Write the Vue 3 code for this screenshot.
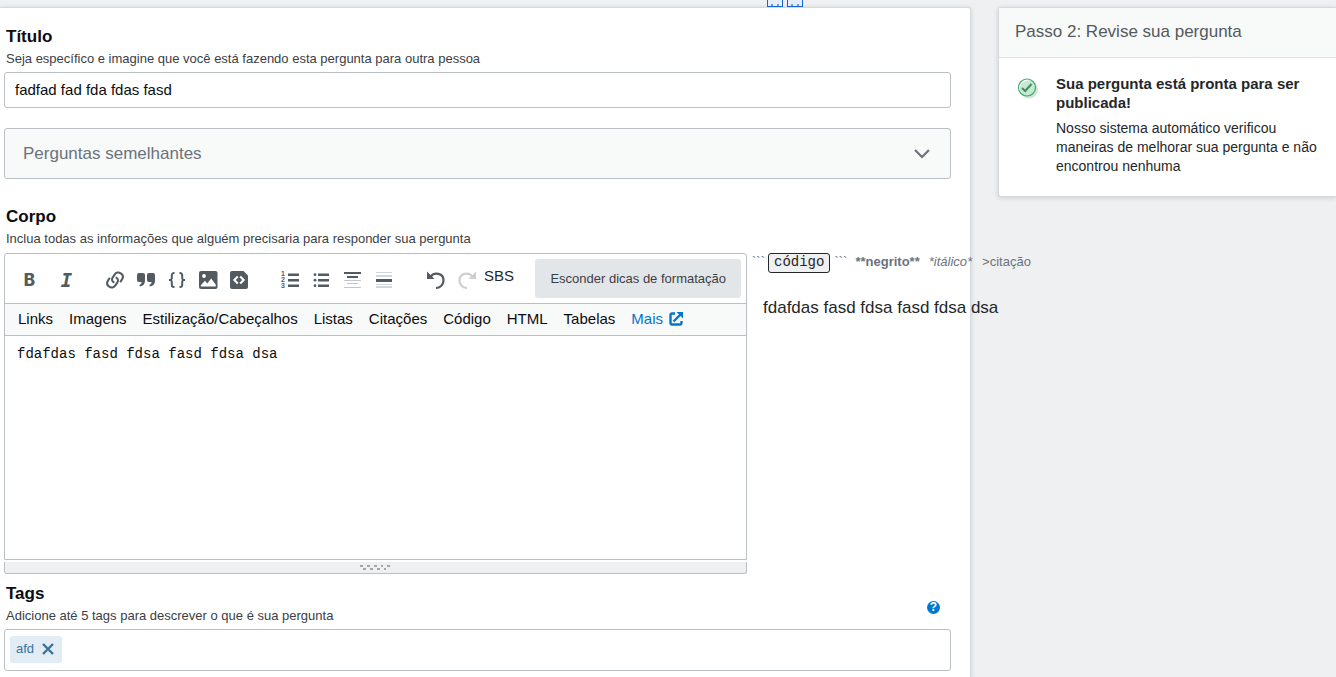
<script setup>
import { ref } from 'vue'

const title = ref('fadfad fad fda fdas fasd')
const body = ref('fdafdas fasd fdsa fasd fdsa dsa')
const helpLinks = ['Links', 'Imagens', 'Estilização/Cabeçalhos', 'Listas', 'Citações', 'Código', 'HTML', 'Tabelas']
</script>

<template>
  <div class="page">
    <div class="clipped-icons" aria-hidden="true"><span></span><span></span></div>
    <main class="card">
      <label class="heading" for="title">Título</label>
      <p class="hint">Seja específico e imagine que você está fazendo esta pergunta para outra pessoa</p>
      <input id="title" v-model="title" class="title-input" type="text">

      <button class="similar" type="button">
        <span>Perguntas semelhantes</span>
        <svg width="18" height="18" viewBox="0 0 18 18"><path d="M2 5l7 7 7-7" fill="none" stroke="#6a737c" stroke-width="2.200" /></svg>
      </button>

      <label class="heading" for="body">Corpo</label>
      <p class="hint">Inclua todas as informações que alguém precisaria para responder sua pergunta</p>

      <div class="compose">
        <div class="editor">
          <div class="frame">
            <div class="toolbar">
              <div class="group group-text">
                <button type="button" class="bold">B</button>
                <button type="button" class="italic">I</button>
              </div>
              <div class="group group-insert">
                <button type="button" aria-label="Link">
                  <svg width="20" height="20" viewBox="0 0 20 20" fill="none" stroke="#535a60" stroke-width="2">
                    <path d="M9.400 12.600C7.200 11.800 6.400 9.600 7.600 7.600L9.600 4.600C11 2.400 13.600 1.900 15.800 3.300S18.400 7.200 17 9.400L15.200 12.200" />
                    <path transform="rotate(180 10 10)" d="M9.400 12.600C7.200 11.800 6.400 9.600 7.600 7.600L9.600 4.600C11 2.400 13.600 1.900 15.800 3.300S18.400 7.200 17 9.400L15.200 12.200" />
                  </svg>
                </button>
                <button type="button" aria-label="Citação">
                  <svg width="20" height="20" viewBox="0 0 20 20" fill="#535a60">
                    <path d="M3 3h4a2 2 0 0 1 2 2v5.500c0 3.500-1.800 5.500-5 6l-.8-1.500c1.500-.6 2.400-1.500 2.400-3H3a2 2 0 0 1-2-2V5a2 2 0 0 1 2-2zM13 3h4a2 2 0 0 1 2 2v5.500c0 3.500-1.800 5.500-5 6l-.8-1.500c1.500-.6 2.400-1.500 2.400-3H13a2 2 0 0 1-2-2V5a2 2 0 0 1 2-2z" />
                  </svg>
                </button>
                <button type="button" aria-label="Código">
                  <svg width="20" height="20" viewBox="0 0 20 20" fill="none" stroke="#535a60" stroke-width="2">
                    <path d="M7.500 3H7a2.200 2.200 0 0 0-2.200 2.200v2.600A2 2 0 0 1 2.800 10H2h.8a2 2 0 0 1 2 2.200v2.600A2.200 2.200 0 0 0 7 17h.5M12.500 3h.5a2.200 2.200 0 0 1 2.200 2.200v2.600a2 2 0 0 0 2 2.200h.8-.8a2 2 0 0 0-2 2.200v2.600A2.200 2.200 0 0 1 13 17h-.5" />
                  </svg>
                </button>
                <button type="button" aria-label="Imagem">
                  <svg width="20" height="20" viewBox="0 0 20 20">
                    <rect x="1" y="1" width="18.500" height="18" rx="2" fill="#535a60" />
                    <circle cx="6" cy="6" r="1.900" fill="#fff" />
                    <path d="M2.800 16.500v-1.200l4.200-4.500 2.200 2.600 4-5 4.600 6.300v1.800z" fill="#fff" />
                  </svg>
                </button>
                <button type="button" aria-label="Trecho">
                  <svg width="20" height="20" viewBox="0 0 20 20">
                    <path d="M3 1h11.500L19 5.500V17a2 2 0 0 1-2 2H3a2 2 0 0 1-2-2V3a2 2 0 0 1 2-2z" fill="#535a60" />
                    <path d="M8.800 6.500L5.300 10l3.500 3.500M11.200 6.500l3.500 3.500-3.500 3.500" fill="none" stroke="#fff" stroke-width="2" />
                  </svg>
                </button>
              </div>
              <div class="group group-block">
                <button type="button" aria-label="Lista numerada">
                  <svg width="20" height="20" viewBox="0 0 20 20" fill="#535a60">
                    <path d="M8 3.500h11v2.500H8zM8 9h11v2.500H8zM8 14.500h11v2.500H8z" />
                    <g class="digits"><text x="1" y="6">1</text><text x="1" y="12">2</text><text x="1" y="18">3</text></g>
                  </svg>
                </button>
                <button type="button" aria-label="Lista">
                  <svg width="20" height="20" viewBox="0 0 20 20" fill="#535a60">
                    <path d="M7 3.500h11v2.500H7zM7 9h11v2.500H7zM7 14.500h11v2.500H7z" />
                    <circle cx="4" cy="4.700" r="1.400" /><circle cx="4" cy="10.200" r="1.400" /><circle cx="4" cy="15.700" r="1.400" />
                  </svg>
                </button>
                <button type="button" aria-label="Título">
                  <svg width="20" height="20" viewBox="0 0 20 20">
                    <path d="M2 2h17v2H2zM5 6h11v2H5z" fill="#535a60" />
                    <path d="M2 10h17v1H2zM5 13h11v1H5zM2 17h17v1H2z" fill="#c4c7ca" />
                  </svg>
                </button>
                <button type="button" aria-label="Linha">
                  <svg width="20" height="20" viewBox="0 0 20 20">
                    <path d="M3 2h16v1H3zM3 5h16v2H3zM3 14h16v1H3zM3 16h16v2H3z" fill="#d4d6d8" />
                    <path d="M3 9h16v3H3z" fill="#535a60" />
                  </svg>
                </button>
              </div>
              <div class="group group-history">
                <button type="button" aria-label="Desfazer">
                  <svg width="20" height="20" viewBox="0 0 20 20">
                    <path d="M4 7.500C8 1 18 3 17.500 11c-.3 4-3.500 7-7.500 7" fill="none" stroke="#535a60" stroke-width="2.200" />
                    <path d="M1 1.500v7.500h7.500z" fill="#535a60" />
                  </svg>
                </button>
                <button type="button" aria-label="Refazer" disabled>
                  <svg width="20" height="20" viewBox="0 0 20 20">
                    <path d="M16 7.500C12 1 2 3 2.500 11c.3 4 3.500 7 7.500 7" fill="none" stroke="#ccced1" stroke-width="2.200" />
                    <path d="M19 1.500v7.500h-7.500z" fill="#ccced1" />
                  </svg>
                </button>
              </div>
              <button type="button" class="sbs">SBS</button>
              <button type="button" class="toggle">Esconder dicas de formatação</button>
            </div>
            <nav class="help">
              <a v-for="item in helpLinks" :key="item" href="#">{{ item }}</a>
              <a href="#" class="more">Mais
                <svg width="14" height="14" viewBox="0 0 14 14">
                  <path d="M6 1.500H3A1.500 1.500 0 0 0 1.500 3v8A1.500 1.500 0 0 0 3 12.500h8A1.500 1.500 0 0 0 12.500 11V9M4.500 9.500L11 3" fill="none" stroke="#0077cc" stroke-width="2.400" />
                  <path d="M7.500 0H14v6.500z" fill="#0077cc" />
                </svg>
              </a>
            </nav>
            <textarea id="body" v-model="body" spellcheck="false"></textarea>
          </div>
          <div class="grip">
            <svg width="32" height="8" viewBox="0 0 32 8" fill="#a5a6a8">
              <path d="M0 1h3v2H0zM3 4h3v2H3zM7 1h3v2H7zM10 4h3v2h-3zM14 1h3v2h-3zM17 4h3v2h-3zM21 1h2v2h-2zM24 4h2v2h-2zM27 1h3v2h-3z" />
            </svg>
          </div>
        </div>
        <div class="preview">
          <div class="syntax">
            <span>```</span><code>código</code><span>```</span><b>**negrito**</b><i>*itálico*</i><span>&gt;citação</span>
          </div>
          <p>{{ body }}</p>
        </div>
      </div>

      <div class="tags-head">
        <div>
          <label class="heading" for="tags">Tags</label>
          <p class="hint">Adicione até 5 tags para descrever o que é sua pergunta</p>
        </div>
        <button type="button" class="ask" aria-label="Ajuda">?</button>
      </div>
      <div class="tags-box">
        <span class="tag">afd
          <button type="button" aria-label="Remover afd">
            <svg width="12" height="12" viewBox="0 0 12 12"><path d="M1 1l10 10M11 1L1 11" stroke="#39739d" stroke-width="2.400" /></svg>
          </button>
        </span>
        <input id="tags" type="text">
      </div>
    </main>

    <aside class="review">
      <h2>Passo 2: Revise sua pergunta</h2>
      <div class="review-body">
        <svg width="22" height="22" viewBox="0 0 22 22">
          <circle cx="12" cy="12.500" r="9" fill="#c7e8d3" />
          <circle cx="10" cy="10.500" r="8.500" fill="#c7e8d3" stroke="#48a868" stroke-width="1.200" />
          <path d="M3 14A8 8 0 0 1 13.500 3.500 9 9 0 0 0 3 14z" fill="#fff" />
          <path d="M5 11l3.200 3L14.500 7" fill="none" stroke="#3d8f58" stroke-width="2" />
        </svg>
        <div>
          <h3>Sua pergunta está pronta para ser publicada!</h3>
          <p>Nosso sistema automático verificou maneiras de melhorar sua pergunta e não encontrou nenhuma</p>
        </div>
      </div>
    </aside>
  </div>
</template>

<style>
body {
  background: #eff0f2;
  overflow: hidden;
}
</style>

<style scoped>
.page {
  box-sizing: border-box;
  min-height: 100vh;
  padding-top: 7px;
  display: grid;
  grid-template-columns: minmax(0, 1fr) 338px;
  column-gap: 27px;
  position: relative;
  font-family: "Liberation Sans", Arial, sans-serif;
  font-size: 15px;
  color: #242729;
}
.page *, .page *::before { box-sizing: border-box; }
button, input, textarea { font: inherit; color: inherit; }
button {
  border: 0;
  padding: 0;
  background: none;
  display: flex;
  align-items: center;
  justify-content: center;
}
p, h2, h3 { margin: 0; }
a { color: inherit; text-decoration: none; }
svg { display: block; flex: none; }

.clipped-icons {
  position: absolute;
  top: 0;
  left: 767px;
  display: flex;
  gap: 4px;
}
.clipped-icons span {
  width: 16px;
  height: 7px;
  border: 1px solid #1464d2;
  border-top: 0;
  padding: 4px 3px 0;
  background: #e6eefa;
}
.clipped-icons span::before {
  content: "";
  display: block;
  height: 2px;
  border: solid #6d9ce0;
  border-width: 0 2px;
}

.card, .review {
  border: 1px solid #d6d8db;
  background: #fff;
  box-shadow: 0 1px 5px rgba(12, 13, 14, 0.15);
}
.card {
  border-left: 0;
  border-radius: 0 3px 0 0;
  padding: 18px 19px 6px 4px;
}
.heading {
  display: block;
  padding-left: 2px;
  font-size: 17px;
  line-height: 22px;
  font-weight: bold;
  color: #0c0d0e;
}
.hint {
  padding: 2px 0 0 2px;
  font-size: 13px;
  line-height: 18px;
  color: #3b4045;
}
.title-input {
  display: block;
  width: 100%;
  height: 36px;
  margin-top: 4px;
  padding: 0 10px 2px;
  border: 1px solid #babfc4;
  border-radius: 3px;
  color: #0c0d0e;
  font-size: 15px;
}
.similar {
  width: 100%;
  height: 51px;
  margin: 20px 0 27px;
  padding: 0 19px 0 18px;
  justify-content: space-between;
  border: 1px solid #babfc4;
  border-radius: 3px;
  background: #f8f9f9;
  font-size: 17px;
  color: #6a737c;
}
.compose { display: flex; margin-top: 5px; }
.editor { flex: 1; min-width: 0; }
.frame {
  border: 1px solid #babfc4;
  border-radius: 3px 3px 0 0;
}
.toolbar {
  display: flex;
  align-items: center;
  height: 49px;
  padding: 0 5px 0 9px;
}
.group { display: flex; padding-top: 2px; }
.group button { width: 31px; height: 32px; color: #535a60; }
.group-text { gap: 6px; }
.group-insert { margin-left: 17px; }
.group-block { margin-left: 20px; }
.group-history { margin-left: 22px; }
.group .bold { font: 800 17px/20px Inter, sans-serif; }
.group .italic { font: italic bold 19px/20px "DejaVu Sans Mono", monospace; }
.digits { font: bold 7px "Liberation Sans", sans-serif; }
.sbs {
  align-self: flex-start;
  height: 43px;
  margin-left: 2px;
  font-size: 15px;
}
.toggle {
  height: 39px;
  margin-left: auto;
  padding: 0 15px;
  border-radius: 3px;
  background: #e3e6e8;
  color: #3b4045;
  font-size: 13px;
}
.help {
  display: flex;
  align-items: center;
  gap: 16px;
  height: 33px;
  padding: 0 13px 3px;
  border: solid #babfc4;
  border-width: 1px 0;
  background: #f8f9f9;
  color: #0c0d0e;
  font-size: 15px;
  white-space: nowrap;
}
.help .more {
  display: flex;
  align-items: center;
  gap: 6px;
  color: #0077cc;
}
.help svg { margin-top: 2px; }
textarea {
  display: block;
  width: 100%;
  height: 223px;
  padding: 9px 12px;
  border: 0;
  outline: 0;
  resize: none;
  background: #fff;
  font: 14px/18px "Liberation Mono", monospace;
  color: #0c0d0e;
}
.grip {
  display: flex;
  justify-content: center;
  height: 12px;
  margin-top: 2px;
  padding-top: 2px;
  border: 1px solid #babfc4;
  border-top: 0;
  border-radius: 0 0 3px 3px;
  background: #eff0f1;
}
.preview {
  width: 204px;
  padding-left: 5px;
  white-space: nowrap;
}
.syntax {
  display: flex;
  height: 20px;
  line-height: 18px;
  font-size: 13px;
  color: #6a737c;
}
.syntax code {
  height: 20px;
  margin: 0 4px 0 3px;
  padding: 0 5px;
  border: 1px solid #242729;
  border-radius: 3px;
  background: #eff0f1;
  font: 14px/16px "Liberation Mono", monospace;
  color: #242729;
}
.syntax b { margin: 0 9px 0 8px; }
.syntax i { margin-right: 10px; }
.preview p {
  padding: 24px 0 0 11px;
  font-size: 17px;
  line-height: 22px;
}
.tags-head {
  display: flex;
  align-items: flex-end;
  justify-content: space-between;
  padding: 9px 11px 0 0;
}
.ask {
  width: 13px;
  height: 13px;
  margin-bottom: 11px;
  border-radius: 50%;
  background: #0077cc;
  color: #fff;
  font-size: 12px;
  line-height: 13px;
  font-weight: bold;
}
.tags-box {
  display: flex;
  align-items: center;
  height: 42px;
  margin-top: 4px;
  padding: 0 5px 2px;
  border: 1px solid #babfc4;
  border-radius: 3px;
}
.tags-box input {
  flex: 1;
  min-width: 0;
  height: 36px;
  border: 0;
  outline: 0;
}
.tag {
  display: flex;
  align-items: center;
  gap: 8px;
  height: 27px;
  padding: 0 8px 1px 6px;
  border-radius: 3px;
  background: #e1ecf4;
  color: #39739d;
  font-size: 13px;
}
.review {
  align-self: start;
  border-right: 0;
  border-radius: 3px 0 0 3px;
}
.review h2 {
  height: 50px;
  padding-left: 16px;
  border-bottom: 1px solid #e0e3e5;
  background: #f8f9f9;
  font-size: 17px;
  line-height: 47px;
  font-weight: normal;
  color: #535a60;
}
.review-body {
  display: flex;
  gap: 17px;
  padding: 16px 4px 20px 18px;
  line-height: 19px;
}
.review-body svg { margin-top: 3px; }
.review h3 { margin-bottom: 7px; font-size: 15px; }
.review p { font-size: 14px; }
</style>
